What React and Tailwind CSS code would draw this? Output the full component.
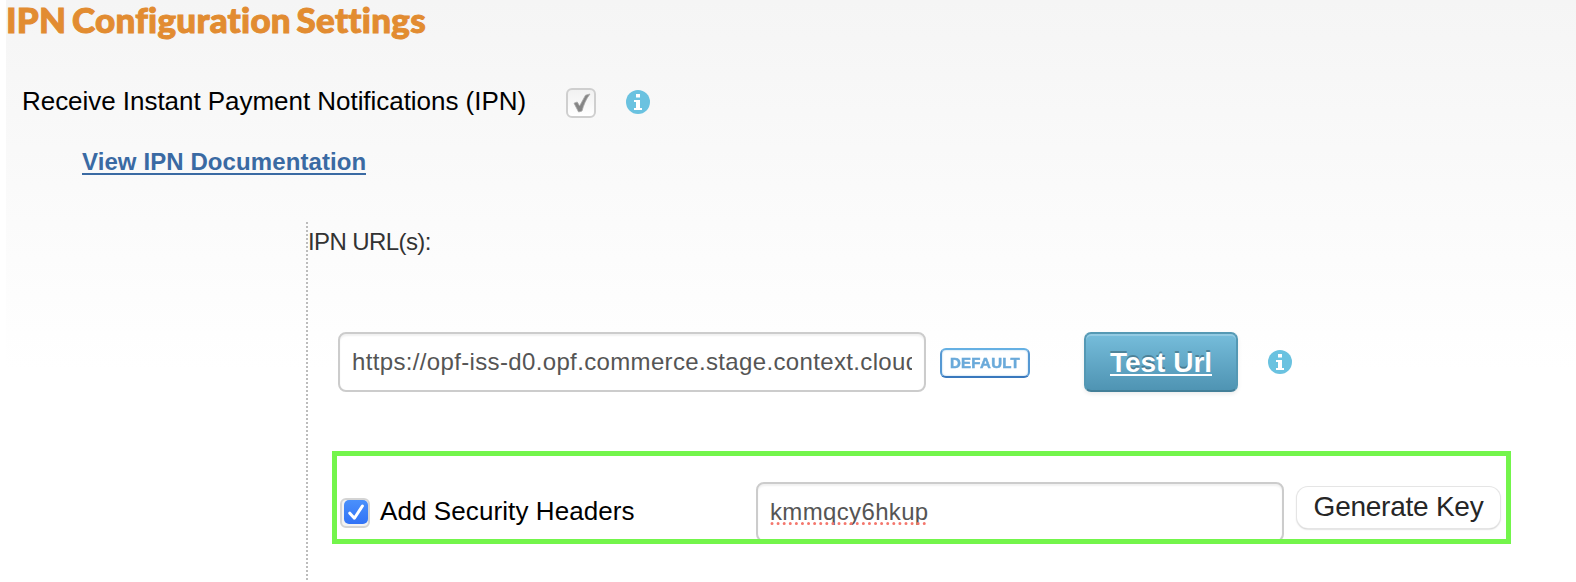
import React from "react";

function InfoIcon({ className }) {
  return (
    <svg viewBox="0 0 24 24" className={`h-6 w-6 shrink-0 ${className}`}>
      <circle cx="12" cy="12" r="12" fill="#6ac2e0" />
      <path fill="#fff" d="M10 4h4v3.6h-4zM8 10h6v8h2v2H8v-2h2v-6H8z" />
    </svg>
  );
}

function GreyCheckbox({ className }) {
  return (
    <span className={`flex h-[30px] w-[30px] shrink-0 items-center justify-center rounded-[6px] border-2 border-[#cfcfcf] bg-linear-to-b from-[#f1f1f1] to-white ${className}`}>
      <svg viewBox="0 0 26 26" className="h-[26px] w-[26px] shrink-0">
        <path d="M6 13.2 L9.2 12 L11.6 16 L17.5 5.2 L22 4 C18 9 15.6 15 14 21 L10.6 22 Z" fill="#858585" stroke="#a8a8a8" strokeWidth="0.8" />
      </svg>
    </span>
  );
}

function BlueCheckbox() {
  return (
    <span className="flex h-[30px] w-[30px] shrink-0 justify-end rounded-[6px] border-2 border-[#d4d4d4] bg-[#f3f3f3]">
      <svg viewBox="0 0 24 24" className="h-6 w-6 shrink-0">
        <defs>
          <linearGradient id="blue" x1="0" y1="0" x2="0" y2="1">
            <stop offset="0" stopColor="#4a90fb" />
            <stop offset="1" stopColor="#3273f6" />
          </linearGradient>
        </defs>
        <rect width="24" height="24" rx="5" fill="url(#blue)" />
        <path d="M5.8 13.2 L10.4 18.2 L18.4 6" fill="none" stroke="#fff" strokeWidth="3" strokeLinecap="round" strokeLinejoin="round" />
      </svg>
    </span>
  );
}

export default function App() {
  return (
    <div className="h-[582px] w-[1576px] overflow-hidden bg-white pl-1.5 font-['Liberation_Sans',Arial,sans-serif]">
      <main className="flex h-full flex-col bg-linear-to-b from-[#f5f5f5] to-white to-[370px]">
        <h1 className="h-[88px] whitespace-nowrap font-['Lato',sans-serif] text-[35px] leading-[38px] font-black tracking-[0.26px] text-[#e28c31] [-webkit-text-stroke:1px_#e28c31] [word-spacing:-3px]">
          IPN Configuration Settings
        </h1>

        <div className="flex h-[60px] pl-4">
          <label className="w-[544px] whitespace-nowrap text-[26px] leading-[26px] tracking-[-0.04px] text-black">
            Receive Instant Payment Notifications (IPN)
          </label>
          <GreyCheckbox />
          <InfoIcon className="mt-0.5 ml-[30px]" />
        </div>

        <div className="flex h-[74px] pl-[76px]">
          <a href="#docs" className="h-[27px] border-b-2 border-[#3a6aa3] text-2xl leading-[27px] font-bold tracking-[0.09px] whitespace-nowrap text-[#3a6aa3]">
            View IPN Documentation
          </a>
        </div>

        <section className="flex flex-1 pl-[300px]">
          <svg className="h-[360px] w-0.5 shrink-0">
            <path d="M1 0V360" stroke="#bcbcbc" strokeWidth="2" strokeDasharray="2 2" />
          </svg>
          <div className="flex flex-1 flex-col">
            <div className="h-[110px] pt-[7px] text-2xl leading-[26px] tracking-[-0.6px] text-[#333]">IPN URL(s):</div>

            <div className="flex h-[119px] items-start pl-[30px]">
              <div className="h-[60px] w-[588px] rounded-[8px] border-2 border-[#ccc] bg-white px-3 shadow-[inset_0_2px_2px_rgba(0,0,0,0.06)]">
                <div className="overflow-hidden text-2xl leading-[56px] tracking-[0.35px] whitespace-nowrap text-[#555]">
                  https://opf-iss-d0.opf.commerce.stage.context.cloud
                </div>
              </div>
              <span className="mt-4 ml-3.5 flex h-[30px] w-[90px] items-center justify-center rounded-[6px] border-2 border-t-[#65b0e3] border-r-[#5598d3] border-b-[#3978bd] border-l-[#5598d3] bg-white text-[15px] font-bold tracking-[0.3px] text-[#6aaada] shadow-[inset_0_0_2px_#9cc8e8]">
                <span className="blur-[0.6px] [-webkit-text-stroke:0.5px_#6aaada]">DEFAULT</span>
              </span>
              <button className="ml-[54px] flex h-[60px] w-[154px] justify-center rounded-[7px] border-2 border-t-[#5599b4] border-r-[#5498b4] border-b-[#437f98] border-l-[#5498b4] bg-linear-to-b from-[#76bddb] to-[#4f94b3] pt-[14px] shadow-[inset_0_2px_0_rgba(255,255,255,0.22),0_2px_4px_rgba(0,0,0,0.08)]">
                <span className="h-[28px] border-b-2 border-white text-[28px] leading-[29px] font-bold whitespace-nowrap text-white [text-shadow:0_-2px_0_rgba(0,0,0,0.25)]">
                  Test Url
                </span>
              </button>
              <InfoIcon className="mt-[18px] ml-[29.5px]" />
            </div>

            <div className="ml-6 flex h-[93px] w-[1179px] items-start overflow-hidden border-5 border-[#73f54b] bg-white">
              <label className="flex w-[419px] pt-[42px] pl-[3px] text-[26px] leading-[26px] whitespace-nowrap text-black">
                <BlueCheckbox />
                <span className="ml-2.5 tracking-[0.09px]">Add Security Headers</span>
              </label>
              <div className="mt-[26px] h-[60px] w-[528px] shrink-0 rounded-[8px] border-2 border-[#ccc] bg-white px-3 shadow-[inset_0_2px_2px_rgba(0,0,0,0.06)]">
                <div className="flex h-[44px] w-fit flex-col pt-[14px] text-2xl leading-[27px] tracking-[0.35px] whitespace-nowrap text-[#555]">
                  kmmqcy6hkup
                  <svg className="-mt-[3px] h-[3px] w-[160px] shrink-0">
                    <path d="M2 1.5H158" stroke="#f4776d" strokeWidth="3" strokeLinecap="round" strokeDasharray="0.01 6.08" />
                  </svg>
                </div>
              </div>
              <button className="mt-[31px] ml-[13px] flex h-[41px] w-[203px] shrink-0 items-start justify-center rounded-[11px] bg-white pt-[4px] text-[28px] leading-[32px] tracking-[-0.25px] whitespace-nowrap text-[#262626] shadow-[0_0_0_1px_#e5e5e5,0_1px_2px_#a5a5a5]">
                Generate Key
              </button>
            </div>
          </div>
        </section>
      </main>
    </div>
  );
}
